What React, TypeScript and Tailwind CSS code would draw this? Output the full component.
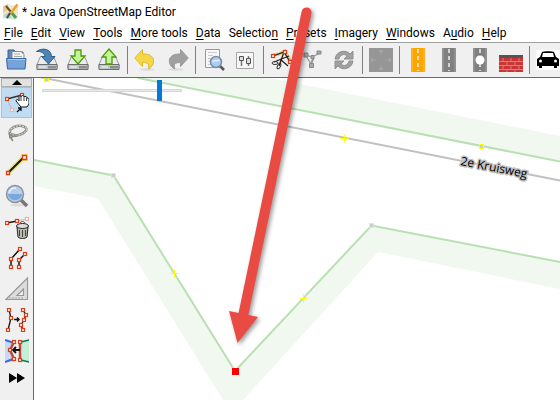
import React from "react";

type IconProps = { children: React.ReactNode };

function Icon({ children }: IconProps) {
  return (
    <svg viewBox="0 0 24 24" className="block size-6 shrink-0" fill="none" aria-hidden="true">
      {children}
    </svg>
  );
}

function Node({ x, y, faded = false }: { x: number; y: number; faded?: boolean }) {
  return (
    <rect x={x - 1.5} y={y - 1.5} width="3" height="3" fill="#fff" stroke={faded ? "#e8b4ac" : "#e03c14"} strokeWidth="1.2" />
  );
}

function Drive() {
  return (
    <>
      <path d="M5.5 8.5h13l3.5 8v4H2v-4z" fill="#ececec" stroke="#999" strokeWidth="1" />
      <path d="M2 16.500h20v5H2z" fill="#c3c6c8" stroke="#6b6e70" strokeWidth="1" />
      <path d="M4 19h7" stroke="#f5f5f5" strokeWidth="1" />
      <path d="M14 18v2.500M16 18v2.500M18 18v2.500M20 18v2.500" stroke="#555" strokeWidth="1" />
    </>
  );
}

function Road({ color, point = false }: { color: string; point?: boolean }) {
  return (
    <Icon>
      <path d="M5 0h14v24H5z" fill={color} />
      <path d="M12 1v22" stroke="#fff" strokeWidth="1.3" strokeDasharray="4 3" />
      <path d="M6 0v24M18 0v24" stroke="#fff" strokeOpacity=".25" />
      {point && <circle cx="12" cy="12" r="4.5" fill="#fff" />}
    </Icon>
  );
}

const icons = {
  open: (
    <Icon>
      <path d="M4 19V2h6l2 2h7v15z" fill="#5f86b6" stroke="#3d618f" />
      <path d="M8 12V3.500h9l3 3V12z" fill="#f2f2f2" stroke="#8a8a8a" />
      <path d="M10 6h6M10 8.500h8" stroke="#aaa" />
      <path d="M2.500 10.500h19.500l-1 10.500H3.500z" fill="#76a3da" stroke="#3465a4" />
      <path d="M4 11.500h17" stroke="#aecbed" />
    </Icon>
  ),
  save: (
    <Icon>
      <Drive />
      <path d="M1.500 3.500C8-1 16 1 16.500 8.500H20L13.500 16 6.500 8.500H10C9.500 5 6 3 1.500 3.500z" fill="#4d84b4" stroke="#2d6088" />
    </Icon>
  ),
  download: (
    <Icon>
      <Drive />
      <path d="M9 2h6v6h4l-7 8-7-8h4z" fill="#c3f49a" stroke="#4e9a06" strokeWidth="1.3" />
    </Icon>
  ),
  upload: (
    <Icon>
      <Drive />
      <path d="M12 1l7 8h-4v7H9V9H5z" fill="#c3f49a" stroke="#4e9a06" strokeWidth="1.3" />
    </Icon>
  ),
  undo: (
    <Icon>
      <ellipse cx="13" cy="21.500" rx="8" ry="1.500" fill="#dedede" />
      <path d="M8.500 1.500v4.500c8-.5 12 3.500 11 8.500-.5 3-3 5.500-5.500 6.500 2-4.500.5-6.500-5.500-6.500v4L.8 10z" fill="#f3d748" stroke="#dfbb28" />
    </Icon>
  ),
  redo: (
    <Icon>
      <ellipse cx="11" cy="21.500" rx="8" ry="1.500" fill="#dedede" />
      <path d="M15.500 1.500V6c-8-.5-12 3.500-11 8.500.5 3 3 5.500 5.500 6.500-2-4.500-.5-6.500 5.500-6.500v4l7.700-8.500z" fill="#a0a0a0" stroke="#989898" />
    </Icon>
  ),
  search: (
    <Icon>
      <path d="M3.500 1.500h14v18h-14z" fill="#f7f7f7" stroke="#999" />
      <path d="M6 4.500h9M6 7.500h5M6 10.500h3M6 13.500h2M6 16.500h3" stroke="#ccc" />
      <path d="M18 18l4 4" stroke="#555" strokeWidth="2.5" />
      <circle cx="14" cy="14" r="5.500" fill="#a9cdf4" stroke="#7c8da3" strokeWidth="1.5" />
      <path d="M10.500 14c2-3 5 0 7-2" stroke="#e3efff" strokeWidth="1.5" />
    </Icon>
  ),
  preferences: (
    <Icon>
      <path d="M3.500 4.500h17v16h-17z" fill="#f7f7f7" stroke="#a5a5a5" />
      <path d="M8.500 8v10M15.500 8v10" stroke="#777" strokeWidth="1.500" />
      <path d="M6.500 8.500h4v4h-4zM13.500 10.500h4v5h-4z" fill="#ddd" stroke="#555" />
    </Icon>
  ),
  split: (
    <Icon>
      <path d="M3 7l6-1 6-3 6 11" stroke="#d8c774" strokeWidth="3" />
      <path d="M3 8l11-4 6 10M4 14l15-6M9 18l5-14M10 11l8 7" stroke="#2d1b14" strokeWidth="1.3" />
      <ellipse cx="5" cy="15" rx="3" ry="1.5" stroke="#333" />
      <ellipse cx="9" cy="18" rx="1.5" ry="3" stroke="#333" transform="rotate(25 9 18)" />
      <Node x={3} y={8} />
      <Node x={15} y={4} />
      <Node x={20} y={14} />
    </Icon>
  ),
  combine: (
    <Icon>
      <path d="M5 7l6 2 8-4M5 8l5 8 2-7M10 17l3-7" stroke="#999" strokeWidth="1.3" />
      <path d="M3 5h4v4H3zM10 7.500h3v3h-3zM16 3h4v3h-4zM8.500 15.500h4v4h-4z" fill="#aaa" stroke="#888" />
    </Icon>
  ),
  refresh: (
    <Icon>
      <path d="M3 11c1-8 11-10 15-5l3-3v8h-9l3-3c-3-3-7-1-8 3z" fill="#a0a0a0" stroke="#909090" />
      <path d="M21 13c-1 8-11 10-15 5l-3 3v-8h9l-3 3c3 3 7 1 8-3z" fill="#a0a0a0" stroke="#909090" />
    </Icon>
  ),
  move: (
    <Icon>
      <path d="M0 0h24v24H0z" fill="#969696" />
      <path d="M12 7V2m-2 2 2-2 2 2M12 17v5m-2-2 2 2 2-2M7 12H2m2-2-2 2 2 2M17 12h5m-2-2 2 2-2 2" stroke="#a6a6a6" strokeWidth="1.2" />
    </Icon>
  ),
  primary: <Road color="#ffa500" />,
  road: <Road color="#808080" />,
  crossing: <Road color="#808080" point />,
  wall: (
    <Icon>
      <path d="M0 7h24v17H0z" fill="#cd3535" />
      <path d="M0 13.500h24M0 17.500h24M0 21.500h24M4 10v3M12 10v3M20 10v3M8 14v3M16 14v3M4 18v3M12 18v3M20 18v3M8 22v2M16 22v2" stroke="#b8a0a0" strokeWidth=".8" />
      <path d="M0 7h24v3H0z" fill="#555" />
    </Icon>
  ),
  car: (
    <Icon>
      <path d="M0 2h24v20H0z" fill="#fff" />
      <path d="M1 11l3-2 2-5c1-1 11-1 12 0l2 5 3 2v7h-2v2h-3v-2H6v2H3v-2H1z" fill="#000" />
      <path d="M7 5h10l1 4H6z" fill="#fff" />
      <circle cx="4.5" cy="13" r="1.5" fill="#fff" />
      <circle cx="19.5" cy="13" r="1.5" fill="#fff" />
    </Icon>
  ),
  select: (
    <Icon>
      <path d="M2 8l15-4" stroke="#333" strokeWidth="1.5" />
      <path d="M2 8l5 11" stroke="#a9b8c8" />
      <Node x={2} y={8} />
      <Node x={17} y={4} />
      <Node x={7} y={19} faded />
      <path d="M11 10c0-2 2-2 3 0V6c0-2 2-2 2 0 0-2 3-2 3 0 0-1 3-1 3 1 2 0 2 1 2 3v3l-2 3h-6z" fill="#fff" stroke="#111" />
      <path d="M16 6v4M19 6v4M21.500 7v3" stroke="#111" strokeWidth=".8" />
      <path d="M12 21l4-4m-3 0h3v3" stroke="#111" strokeWidth="1.3" />
    </Icon>
  ),
  lasso: (
    <Icon>
      <ellipse cx="13" cy="8.500" rx="8.500" ry="4.500" stroke="#8b8b84" strokeWidth="2.6" transform="rotate(-12 13 8.5)" />
      <ellipse cx="13" cy="8.500" rx="8.500" ry="4.500" stroke="#deded6" strokeDasharray="2 1" transform="rotate(-12 13 8.5)" />
      <path d="M4 11c0 3 4 4 8 3M6 13c-3 2 0 5 1 2s-4-3-2 0l3 4" stroke="#8b8b84" strokeWidth="1.5" />
    </Icon>
  ),
  draw: (
    <Icon>
      <path d="M3 20L19 4" stroke="#ece66f" strokeWidth="5" />
      <path d="M16 1h7v7h-7z" fill="#ece66f" />
      <path d="M3 20L19 4" stroke="#15152d" strokeWidth="2" />
      <path d="M17.500 2.500h4v4h-4zM1.500 18.500h3v3h-3z" fill="#fff" stroke="#e03c14" strokeWidth="1.3" />
    </Icon>
  ),
  zoom: (
    <Icon>
      <ellipse cx="13" cy="21" rx="8" ry="1.5" fill="#ddd" />
      <path d="M16 16l6 6" stroke="#777" strokeWidth="3.5" />
      <circle cx="10" cy="10" r="8.5" fill="#b3cee9" stroke="#8e9399" strokeWidth="1.5" />
      <path d="M3 10h14c-1 8-13 8-14 0z" fill="#79a8dc" />
      <path d="M4 9c1-5 5-5 7-5" stroke="#e8f2fc" strokeWidth="1.5" />
    </Icon>
  ),
  remove: (
    <Icon>
      <path d="M2 8l10-2" stroke="#111" strokeWidth="1.5" />
      <path d="M12 6l9-2" stroke="#bbb" />
      <Node x={2} y={8} />
      <Node x={12} y={6} />
      <Node x={22} y={4} faded />
      <path d="M12 12h11l-1 10c-2 2-7 2-9 0z" fill="#b9b9b0" stroke="#222" />
      <ellipse cx="17.5" cy="11" rx="6" ry="2.5" fill="#ddd" stroke="#222" />
      <path d="M15 8c1-2 4-2 5 0M14.500 15v6M17.500 15v7M20.500 15v6" stroke="#444" />
    </Icon>
  ),
  parallel: (
    <Icon>
      <path d="M6 21v-8l9-10M14 21v-7l6-6" stroke="#111" strokeWidth="1.5" />
      <Node x={6} y={21} />
      <Node x={6} y={13} />
      <Node x={15} y={3} />
      <Node x={14} y={21} />
      <Node x={14} y={14} />
      <Node x={20} y={8} />
    </Icon>
  ),
  angle: (
    <Icon>
      <path d="M.8 22.500L22.500 1v21.500zM12 18.500h6.500V12z" fill="#ddd" fillRule="evenodd" stroke="#999" strokeWidth="1.2" />
      <path d="M5 22v-2M8 22v-2M11 22v-2M14 22v-2M17 22v-2" stroke="#aaa" />
    </Icon>
  ),
  improve: (
    <Icon>
      <path d="M4 2l2 8-3 12M18 2l3 5-2 5-3 5 2 5" stroke="#111" strokeWidth="1.3" />
      <path d="M9 11.500h5m-2-2 2 2-2 2" stroke="#111" strokeWidth="1.5" />
      <Node x={4} y={2} />
      <Node x={6} y={10} />
      <Node x={3} y={22} />
      <Node x={18} y={2} />
      <Node x={21} y={7} />
      <Node x={19} y={12} />
      <Node x={16} y={17} />
      <Node x={18} y={22} />
    </Icon>
  ),
  align: (
    <Icon>
      <path d="M0 1l9 2-4 9 4 10v1H0z" fill="#c8d9f8" />
      <path d="M15 2l9-1v22h-9z" fill="#c5eed7" />
      <path d="M0 1l9 3M0 23l8-3" stroke="#3867ed" strokeWidth="2" />
      <path d="M16 3l8-2M16 21l8 2" stroke="#0d7751" strokeWidth="1.5" />
      <path d="M9 3l-4 8 4 9M15 3v19" stroke="#b94b3b" strokeWidth="2.5" />
      <path d="M15 11H8m3-3-3 3 3 3" stroke="#111" strokeWidth="1.8" />
      <Node x={9} y={3} />
      <Node x={5} y={11} />
      <Node x={9} y={20} />
      <Node x={15} y={3} />
      <Node x={15} y={21} />
    </Icon>
  ),
};

const menus: [before: string, key: string, after: string][] = [
  ["", "F", "ile"],
  ["", "E", "dit"],
  ["", "V", "iew"],
  ["", "T", "ools"],
  ["", "M", "ore tools"],
  ["", "D", "ata"],
  ["Selectio", "n", ""],
  ["", "P", "resets"],
  ["", "I", "magery"],
  ["", "W", "indows"],
  ["A", "u", "dio"],
  ["", "H", "elp"],
];

type Tool = [label: string, icon: React.ReactNode];

const toolGroups: Tool[][] = [
  [["Open", icons.open], ["Save", icons.save], ["Download", icons.download], ["Upload", icons.upload]],
  [["Undo", icons.undo], ["Redo", icons.redo]],
  [["Search", icons.search], ["Preferences", icons.preferences]],
  [["Split way", icons.split], ["Combine way", icons.combine], ["Refresh", icons.refresh]],
  [["Move imagery", icons.move]],
  [["Primary road", icons.primary], ["Road", icons.road], ["Crossing", icons.crossing], ["Wall", icons.wall]],
  [["Car", icons.car]],
];

const mapModes: Tool[] = [
  ["Select", icons.select],
  ["Lasso", icons.lasso],
  ["Draw", icons.draw],
  ["Zoom", icons.zoom],
  ["Delete", icons.remove],
  ["Parallel", icons.parallel],
  ["Extrude", icons.angle],
  ["Improve way accuracy", icons.improve],
  ["Align", icons.align],
];

const nodes = [[46.5, 79.5], [113.5, 175.5], [481.5, 146.5], [371.5, 225.5]];
const midpoints = [[344.5, 138.5], [174.5, 273.5], [303.5, 298.5]];

function MapCanvas() {
  return (
    <svg viewBox="34 78 526 322" preserveAspectRatio="xMinYMin slice" className="absolute inset-0 size-full" role="img" aria-label="Map">
      <path d="M138 78L560 161.500V136L270 78z" fill="#f1f8f0" />
      <path d="M34 160l79.500 15.500L235 371l136.500-145.500L560 262v27L378 252 243 400h-20L98 198.500 34 186z" fill="#f1f8f0" />
      <path d="M34 76l526 104.500" stroke="#c0c0c0" strokeWidth="2" />
      <path d="M138 78l422 83.500M34 160l79.500 15.500L235 371l136.500-145.500L560 262" fill="none" stroke="#b9e0b2" strokeWidth="2" />
      {nodes.map(([x, y]) => (
        <rect key={x} x={x - 2} y={y - 2} width="4" height="4" fill="#ccc" stroke="#ff0" />
      ))}
      {midpoints.map(([x, y]) => (
        <path key={x} d={`M${x - 4} ${y}h8M${x} ${y - 4}v8`} stroke="#ff0" />
      ))}
      <rect x="232" y="368" width="7" height="7" fill="#f00" />
      <text
        x="460" y="165" transform="rotate(11 460 165)" fill="#000" stroke="#c0c0c0" strokeWidth="3" strokeLinejoin="round"
        className="font-['Open_Sans',sans-serif] text-[12px] [paint-order:stroke]"
      >
        2e Kruisweg
      </text>
    </svg>
  );
}

export default function App() {
  return (
    <div className="relative flex h-screen flex-col overflow-hidden bg-white font-[Roboto,sans-serif] text-[12px] text-black">
      <header className="flex h-6 shrink-0 items-center gap-0.5 pl-0.5">
        <svg viewBox="0 0 18 18" className="size-[18px]" aria-hidden="true">
          <path d="M1 3l5-2 5 2 5-1v13l-5 2-5-2-5 1z" fill="#e6ecd0" />
          <path d="M1 3l5-2v6l-5 3z" fill="#f0c98b" />
          <path d="M1 13l5-4 4 6-5 1z" fill="#a8d8dc" />
          <path d="M10 3l5-1v6l-4 2z" fill="#f3dfae" />
          <path d="M4 3l5 6" stroke="#6d4b39" strokeWidth="2" />
          <path d="M9 9l5 6" stroke="#45a45a" strokeWidth="3" />
          <path d="M15.500 1.500L8 11" stroke="#e8a42c" strokeWidth="2.5" />
          <path d="M8 10l-3 5" stroke="#5b4334" strokeWidth="2" />
        </svg>
        <h1>* Java OpenStreetMap Editor</h1>
      </header>
      <nav className="flex h-[18px] shrink-0 items-center gap-2 pl-1" aria-label="Main menu">
        {menus.map(([before, key, after]) => (
          <button key={before + key + after} className="whitespace-nowrap">
            {before}
            <span className="underline underline-offset-2">{key}</span>
            {after}
          </button>
        ))}
      </nav>
      <div className="flex h-9 shrink-0 items-center overflow-hidden border-t border-b border-t-[#a0a0a0] border-b-[#696969] bg-[#f0f0f0]" role="toolbar" aria-label="Tools">
        {toolGroups.map((group, index) => (
          <React.Fragment key={group[0][0]}>
            {index > 0 && <div className="mr-0.5 ml-[3px] h-7 w-px shrink-0 bg-[#808080]" />}
            {group.map(([label, icon]) => (
              <button key={label} aria-label={label} className="flex h-[31px] w-[31px] shrink-0 items-center justify-center">
                {icon}
              </button>
            ))}
          </React.Fragment>
        ))}
      </div>
      <div className="flex min-h-0 flex-1">
        <aside className="flex w-[34px] shrink-0 flex-col overflow-hidden border-r border-[#696969] bg-[#f0f0f0] px-px" aria-label="Map modes">
          <button aria-label="Scroll up" className="flex h-[9px] shrink-0 items-center justify-center border border-[#adadad] bg-[#e1e1e1]">
            <svg viewBox="0 0 10 5" className="h-[5px] w-2.5"><path d="M0 5l5-5 5 5z" fill="#000" /></svg>
          </button>
          {mapModes.map(([label, icon], index) => (
            <button
              key={label}
              aria-label={label}
              className={index === 0
                ? "flex h-[31px] shrink-0 items-center justify-center border border-[#90c8f6] bg-[#c0dcf3]"
                : "flex h-[31px] shrink-0 items-center justify-center"}
            >
              {icon}
            </button>
          ))}
          <button aria-label="More modes" className="flex h-6 shrink-0 items-center justify-center">
            <svg viewBox="0 0 16 10" className="h-2.5 w-4"><path d="M0 0l8 5-8 5zM8 0l8 5-8 5z" fill="#000" /></svg>
          </button>
        </aside>
        <main className="relative min-w-0 flex-1 overflow-hidden bg-white">
          <MapCanvas />
          <input
            type="range"
            aria-label="Zoom level"
            defaultValue={86}
            className="absolute top-0.5 left-2 h-[21px] w-[140px] appearance-none bg-transparent [&::-webkit-slider-runnable-track]:h-[3px] [&::-webkit-slider-runnable-track]:border [&::-webkit-slider-runnable-track]:border-[#d6d6d6] [&::-webkit-slider-runnable-track]:bg-[#e7eaea] [&::-webkit-slider-thumb]:-mt-[10px] [&::-webkit-slider-thumb]:h-[21px] [&::-webkit-slider-thumb]:w-[5px] [&::-webkit-slider-thumb]:appearance-none [&::-webkit-slider-thumb]:bg-[#007ad9]"
          />
        </main>
      </div>
      <svg viewBox="0 0 560 400" className="pointer-events-none absolute top-0 left-0 h-[400px] w-[560px] drop-shadow-[2px_2px_2px_#00000066]" aria-hidden="true">
        <path d="M306.500 12.500L243 316" stroke="#e94b43" strokeWidth="10" strokeLinecap="round" />
        <path d="M229 311l29 6-20.500 26z" fill="#e94b43" />
      </svg>
    </div>
  );
}
